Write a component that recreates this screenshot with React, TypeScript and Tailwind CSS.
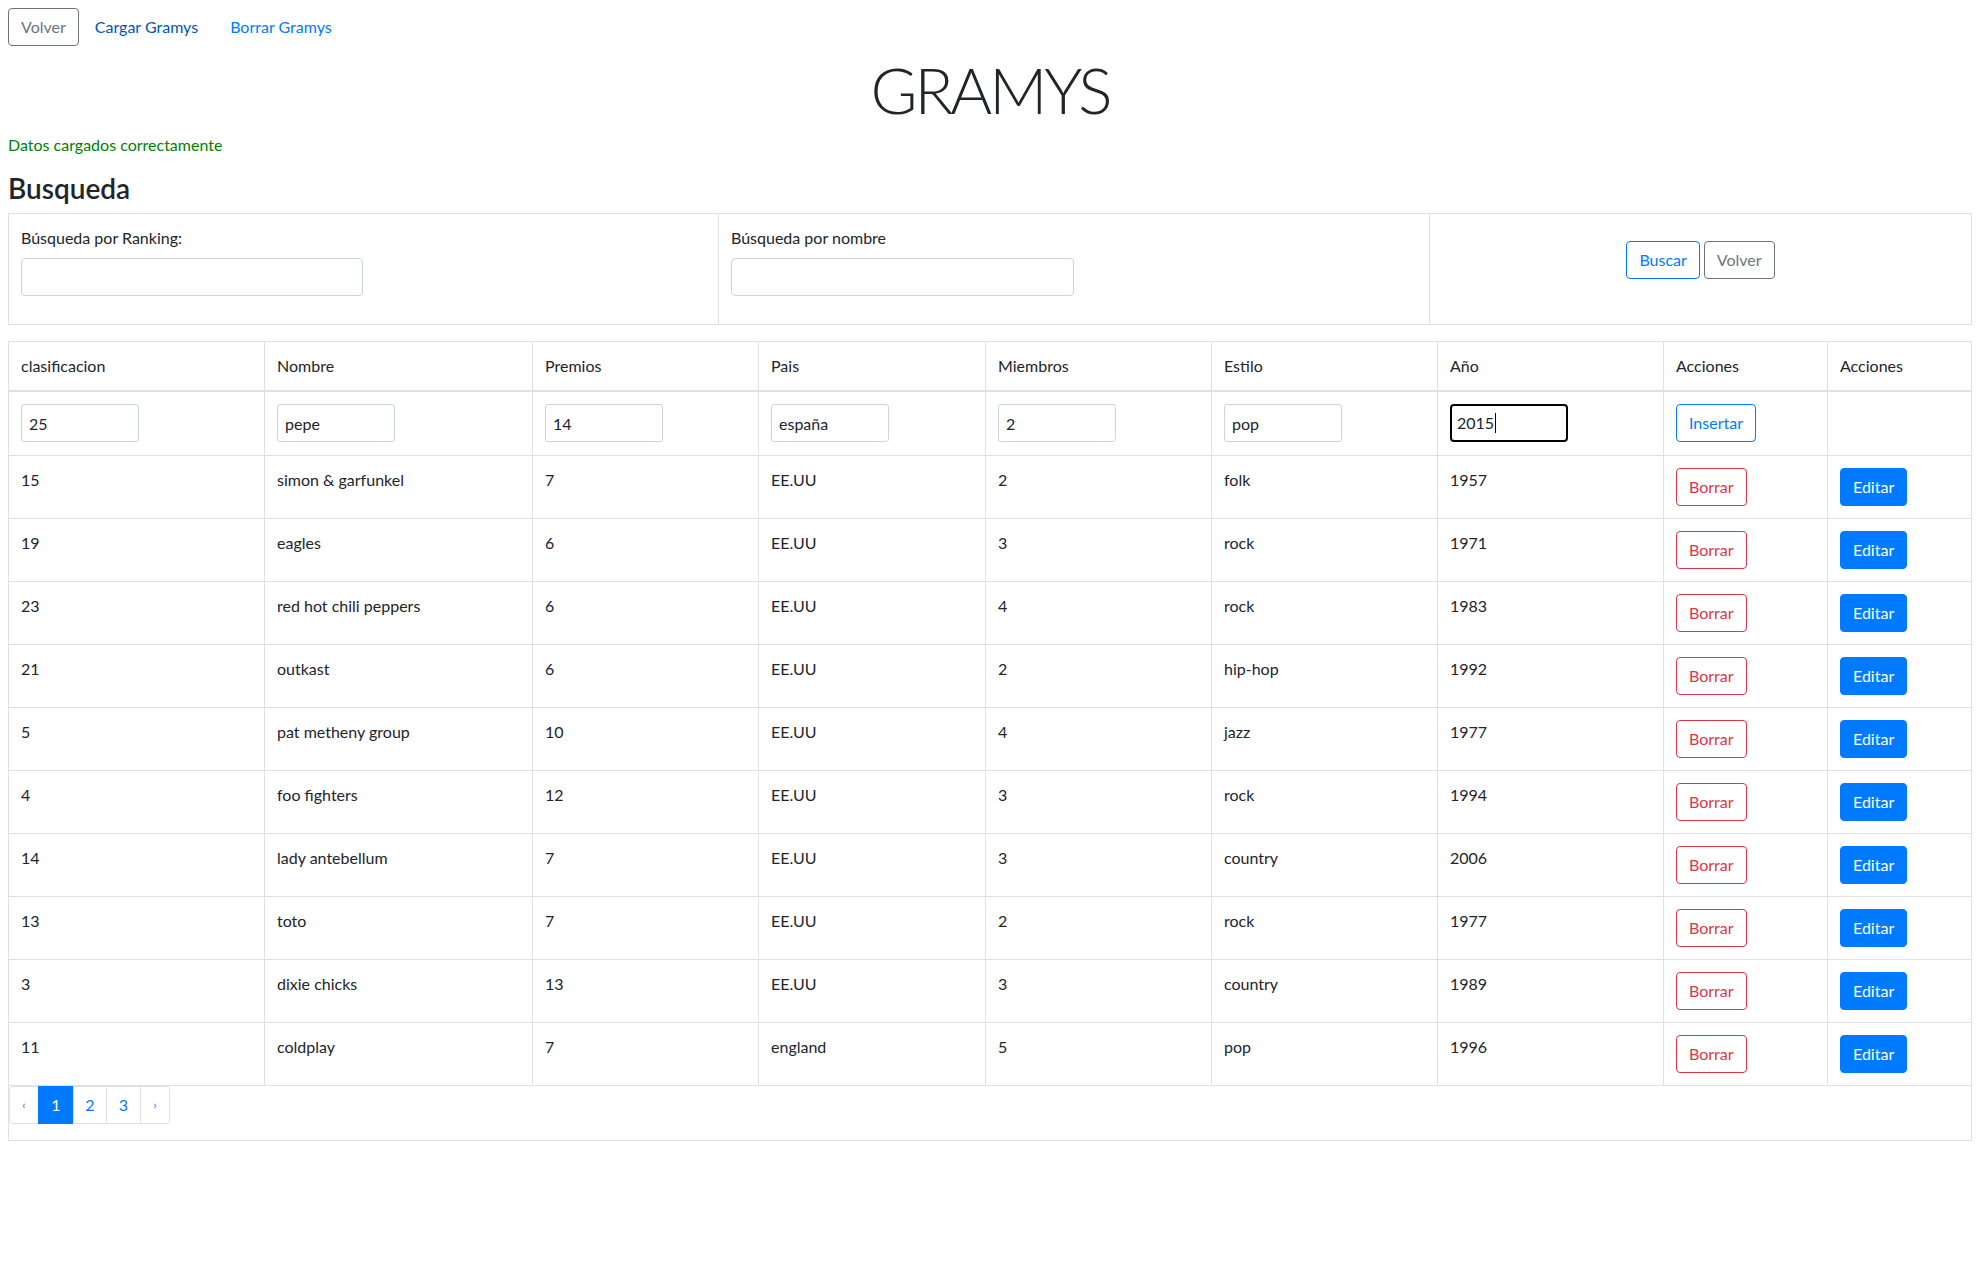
import React from "react";

const rows = [
  ["15", "simon & garfunkel", "7", "EE.UU", "2", "folk", "1957"],
  ["19", "eagles", "6", "EE.UU", "3", "rock", "1971"],
  ["23", "red hot chili peppers", "6", "EE.UU", "4", "rock", "1983"],
  ["21", "outkast", "6", "EE.UU", "2", "hip-hop", "1992"],
  ["5", "pat metheny group", "10", "EE.UU", "4", "jazz", "1977"],
  ["4", "foo fighters", "12", "EE.UU", "3", "rock", "1994"],
  ["14", "lady antebellum", "7", "EE.UU", "3", "country", "2006"],
  ["13", "toto", "7", "EE.UU", "2", "rock", "1977"],
  ["3", "dixie chicks", "13", "EE.UU", "3", "country", "1989"],
  ["11", "coldplay", "7", "england", "5", "pop", "1996"],
];

const headers = ["clasificacion", "Nombre", "Premios", "Pais", "Miembros", "Estilo", "Año", "Acciones", "Acciones"];
const newRow = ["25", "pepe", "14", "españa", "2", "pop"];

const cell = "p-3 leading-6 border-b border-r border-[#dee2e6]";
const lastCell = "p-3 leading-6 border-b border-[#dee2e6]";
const inputCell = "px-3 pt-3 pb-[13px] leading-6 border-b border-r border-[#dee2e6]";
const inputLastCell = "px-3 pt-3 pb-[13px] leading-6 border-b border-[#dee2e6]";

function SmallInput({ value }: { value: string }) {
  return (
    <input
      readOnly
      defaultValue={value}
      className="block h-[38px] w-[118px] rounded-[3px] border border-[#ced4da] bg-white pl-[7px] text-[16px] text-[#212529] outline-none"
    />
  );
}

export default function App() {
  return (
    <div className="min-h-screen bg-white px-2 pt-2 font-['Lato','Liberation_Sans',sans-serif] text-[16px] text-[#212529]">
      <nav className="flex h-[38px] items-center">
        <button className="h-[38px] rounded-[4px] border border-[#6c757d] px-3 leading-6 text-[#6c757d]">Volver</button>
        <a className="px-4 leading-6 text-[#0056b3]">Cargar Gramys</a>
        <a className="px-4 leading-6 text-[#007bff]">Borrar Gramys</a>
      </nav>

      <div className="flex h-[87px] items-center justify-center">
        <h1 className="text-[64px] font-light leading-none tracking-[-3px]">GRAMYS</h1>
      </div>

      <p className="h-6 leading-6 text-[#008000]">Datos cargados correctamente</p>
      <h3 className="mb-2 mt-[15px] text-[28px] font-semibold leading-[33px]">Busqueda</h3>

      <div className="grid grid-cols-[710px_711px_1fr] border border-[#dee2e6]">
        <div className="border-r border-[#dee2e6] p-3">
          <label className="mb-2 block leading-6">Búsqueda por Ranking:</label>
          <input className="mb-4 block h-[38px] w-[342px] rounded-[4px] border border-[#ced4da] px-3 outline-none" />
        </div>
        <div className="border-r border-[#dee2e6] p-3">
          <label className="mb-2 block leading-6">Búsqueda por nombre</label>
          <input className="mb-4 block h-[38px] w-[343px] rounded-[4px] border border-[#ced4da] px-3 outline-none" />
        </div>
        <div className="flex justify-center gap-1 pt-[27px]">
          <button className="h-[38px] rounded-[4px] border border-[#007bff] px-3 leading-6 text-[#007bff]">Buscar</button>
          <button className="h-[38px] rounded-[4px] border border-[#6c757d] px-3 leading-6 text-[#6c757d]">Volver</button>
        </div>
      </div>

      <div className="mt-4 border border-[#dee2e6]">
        <div className="grid grid-cols-[256px_268px_226px_227px_226px_226px_226px_164px_143px]">
          {headers.map((h, i) => (
            <div
              key={"h" + i}
              className={
                i === headers.length - 1
                  ? "border-b-2 border-[#dee2e6] p-3 leading-6"
                  : "border-b-2 border-r border-[#dee2e6] p-3 leading-6"
              }
            >
              {h}
            </div>
          ))}

          {newRow.map((v, i) => (
            <div key={"n" + i} className={inputCell}>
              <SmallInput value={v} />
            </div>
          ))}
          <div className={inputCell}>
            <div className="flex h-[38px] w-[118px] items-center rounded-[4px] border-2 border-black pl-[5px]">
              <span>2015</span>
              <span className="ml-[1px] h-[20px] w-px bg-black" />
            </div>
          </div>
          <div className={inputCell}>
            <button className="h-[38px] rounded-[4px] border border-[#007bff] px-3 leading-6 text-[#007bff]">Insertar</button>
          </div>
          <div className={inputLastCell} />

          {rows.map((r, ri) => (
            <React.Fragment key={ri}>
              {r.map((v, ci) => (
                <div key={ci} className={cell}>
                  {v}
                </div>
              ))}
              <div className={cell}>
                <button className="h-[38px] rounded-[4px] border border-[#dc3545] px-3 leading-6 text-[#dc3545]">Borrar</button>
              </div>
              <div className={lastCell}>
                <button className="h-[38px] rounded-[4px] border border-[#007bff] bg-[#007bff] px-3 leading-6 text-white">Editar</button>
              </div>
            </React.Fragment>
          ))}
        </div>

        <ul className="mb-4 flex">
          <li className="flex h-[38px] w-[30px] items-center justify-center rounded-l-[4px] border border-[#dee2e6] text-[12px] text-[#6c757d]">‹</li>
          <li className="-ml-px flex h-[38px] w-[36px] items-center justify-center border border-[#007bff] bg-[#007bff] text-white">1</li>
          <li className="-ml-px flex h-[38px] w-[34px] items-center justify-center border border-[#dee2e6] text-[#007bff]">2</li>
          <li className="-ml-px flex h-[38px] w-[35px] items-center justify-center border border-[#dee2e6] text-[#007bff]">3</li>
          <li className="-ml-px flex h-[38px] w-[30px] items-center justify-center rounded-r-[4px] border border-[#dee2e6] text-[12px] text-[#007bff]">›</li>
        </ul>
      </div>
    </div>
  );
}
